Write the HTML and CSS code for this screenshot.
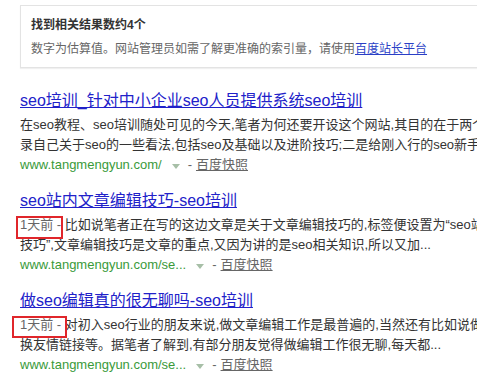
FILE: index.html
```html
<!DOCTYPE html>
<html lang="zh-CN">
<head>
  <meta charset="UTF-8">
  <title>seo培训 - 搜索结果</title>
  <link rel="stylesheet" href="styles.css">
</head>
<body>
  <div class="page">
    <!-- result count notice -->
    <div class="notice">
      <div class="notice-title">找到相关结果数约4个</div>
      <div class="notice-text">数字为估算值。网站管理员如需了解更准确的索引量，请使用<a href="#">百度站长平台</a></div>
    </div>

    <div class="result">
      <h3 class="result-title"><a href="#">seo培训_针对中小企业seo人员提供系统seo培训</a></h3>
      <div class="result-abstract">
        <div class="line">在seo教程、seo培训随处可见的今天,笔者为何还要开设这个网站,其目的在于两个方面:一是记</div>
        <div class="line">录自己关于seo的一些看法,包括seo及基础以及进阶技巧;二是给刚入行的seo新手</div>
      </div>
      <div class="result-url">
        <span class="url">www.tangmengyun.com/</span>
        <span class="arrow"></span>
        <span class="sep">-</span>
        <a class="cache" href="#">百度快照</a>
      </div>
    </div>

    <div class="result">
      <h3 class="result-title"><a href="#">seo站内文章编辑技巧-seo培训</a></h3>
      <div class="result-abstract">
        <div class="line"><span class="date mark-a">1天前 - </span>比如说笔者正在写的这边文章是关于文章编辑技巧的,标签便设置为“seo站内文章编辑</div>
        <div class="line">技巧”,文章编辑技巧是文章的重点,又因为讲的是seo相关知识,所以又加...</div>
      </div>
      <div class="result-url">
        <span class="url">www.tangmengyun.com/se...</span>
        <span class="arrow"></span>
        <span class="sep">-</span>
        <a class="cache" href="#">百度快照</a>
      </div>
    </div>

    <div class="result">
      <h3 class="result-title"><a href="#">做seo编辑真的很无聊吗-seo培训</a></h3>
      <div class="result-abstract">
        <div class="line"><span class="date mark-b">1天前 - </span>对初入seo行业的朋友来说,做文章编辑工作是最普遍的,当然还有比如说做</div>
        <div class="line">换友情链接等。据笔者了解到,有部分朋友觉得做编辑工作很无聊,每天都...</div>
      </div>
      <div class="result-url">
        <span class="url">www.tangmengyun.com/se...</span>
        <span class="arrow"></span>
        <span class="sep">-</span>
        <a class="cache" href="#">百度快照</a>
      </div>
    </div>
  </div>
</body>
</html>
```

FILE: styles.css
```css
:root {
  --title-blue: #2121c9;
  --link-blue: #2a3fc6;
  --text: #333333;
  --muted: #666666;
  --url-green: #3a9a3a;
  --mark-red: #e0262b;
}

html, body {
  margin: 0;
  overflow: hidden;
  background: #ffffff;
}

body {
  font-family: "Liberation Sans", Arial, "Noto Sans CJK SC", sans-serif;
  color: var(--text);
}

.page {
  width: 620px;
  padding: 5px 0 0 20px;
}

.notice {
  border: 1px solid #e3e3e3;
  box-shadow: 0 1px 1px rgba(0,0,0,0.06);
  padding: 7px 10px 6px;
  font-size: 12px;
  line-height: 24px;
  white-space: nowrap;
}

.notice-title {
  font-weight: bold;
  color: #333;
}

.notice-text {
  color: var(--muted);
}

.notice-text a {
  color: var(--link-blue);
  text-decoration: underline;
}

.result {
  margin-top: 22px;
  white-space: nowrap;
}

.result + .result {
  margin-top: 15px;
}

.result-title {
  margin: 0 0 3px;
  font-size: 16px;
  font-weight: normal;
  line-height: 22px;
}

.result-title a {
  color: var(--title-blue);
  text-decoration: underline;
}

.result-abstract {
  font-size: 13px;
  line-height: 20px;
}

.date {
  color: var(--muted);
  position: relative;
}

/* red annotation frames drawn over the date */
.date::after {
  content: "";
  position: absolute;
  border: 2px solid var(--mark-red);
  box-sizing: border-box;
}

.mark-a::after {
  left: -4px;
  top: -1px;
  width: 47px;
  height: 23px;
}

.mark-b::after {
  left: -8px;
  top: -1px;
  width: 55px;
  height: 22px;
}

.result-url {
  font-size: 13px;
  line-height: 20px;
  display: flex;
  align-items: center;
  gap: 4px;
}

.url {
  color: var(--url-green);
}

.arrow {
  width: 0;
  height: 0;
  margin: 2px 4px 0 6px;
  border-left: 4px solid transparent;
  border-right: 4px solid transparent;
  border-top: 5px solid #a7bfa7;
}

.sep {
  color: var(--muted);
}

.cache {
  color: var(--muted);
  text-decoration: underline;
}
```
